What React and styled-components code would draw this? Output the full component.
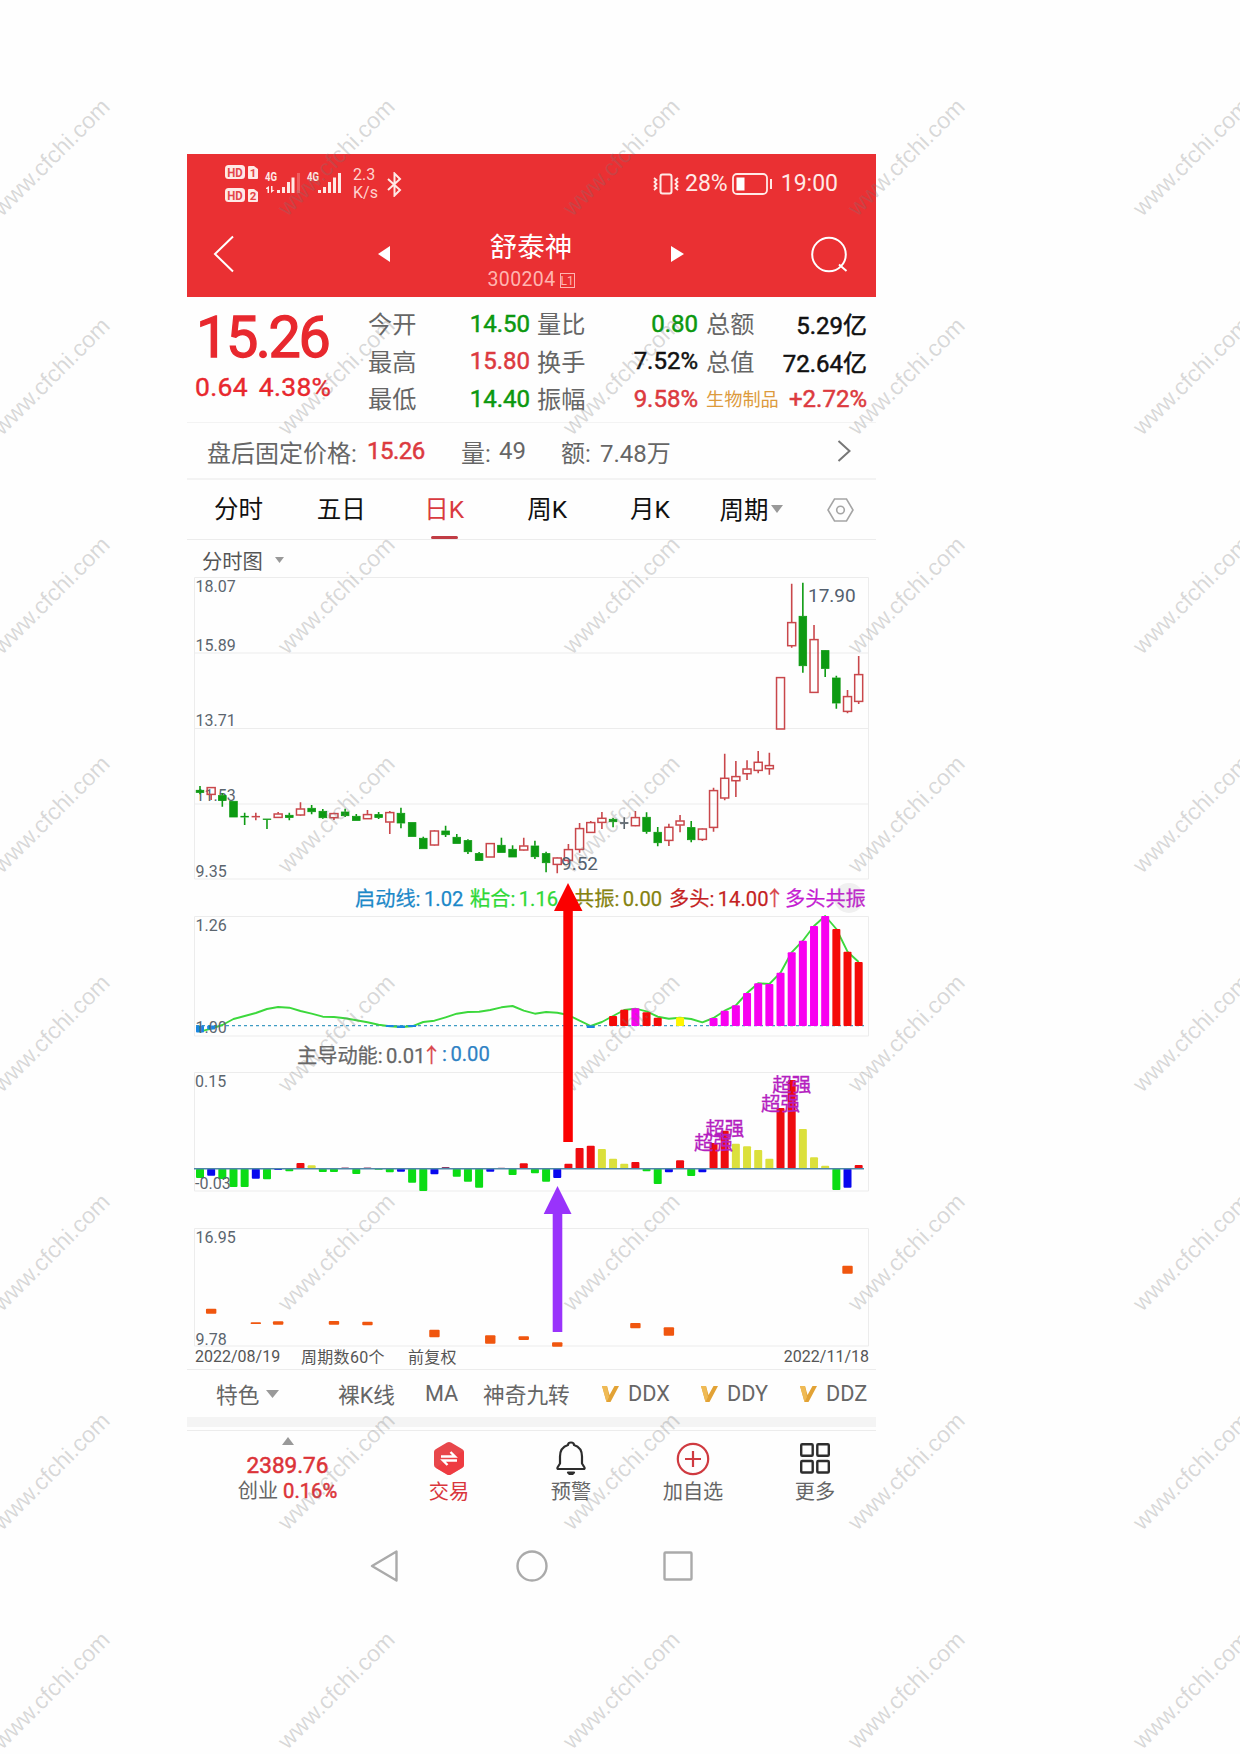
import styled, { createGlobalStyle } from 'styled-components'

const GlobalStyle = createGlobalStyle`
  * { box-sizing: border-box; }
  body {
    margin: 0;
    background: #fefefe;
    font-family: Roboto, "Noto Sans CJK SC", sans-serif;
  }
`

const Page = styled.div`
  position: relative;
  width: 1240px;
  height: 1754px;
  padding: 154px 0 0 187px;
  overflow: hidden;
`

const Screen = styled.main`
  width: 689px;
  color: #666;
  white-space: nowrap;
`

const Header = styled.header`
  height: 143px;
  background: #ea3033;
  color: #fff;
`

const StatusBar = styled.div`
  height: 60px;
  display: flex;
  align-items: center;
  padding: 0 38px;
  color: #ffe9e6;
`

const Speed = styled.div`
  width: 34px;
  font-size: 16px;
  line-height: 18px;
  color: #ffd3cf;
`

const StatusText = styled.span`
  font-size: 23px;
  line-height: 30px;
  margin-left: ${p => p.$ml}px;
`

const Spacer = styled.div`
  flex: 1;
`

const TitleBar = styled.div`
  height: 83px;
  display: grid;
  grid-template-columns: 165px 306px 1fr 38px;
  align-items: start;
  padding: 17px 27px 0 26px;
`

const TitleNav = styled.div`
  display: grid;
  grid-template-columns: 1fr auto 1fr;

  svg:last-child {
    justify-self: end;
  }
`

const TitleText = styled.div`
  text-align: center;
`

const StockName = styled.h1`
  margin: 0;
  font-size: 27.5px;
  line-height: 34px;
  font-weight: 400;
`

const StockCode = styled.div`
  display: flex;
  align-items: center;
  justify-content: center;
  gap: 4px;
  font-size: 19.5px;
  line-height: 30px;
  letter-spacing: 0.4px;
  color: #ffb5b0;
`

const Level = styled.span`
  width: 15px;
  height: 15px;
  border: 1px solid #ffb5b0;
  font-size: 12px;
  line-height: 14px;
  letter-spacing: 0;
  text-align: center;
`

const Quote = styled.section`
  display: flex;
  height: 126px;
  border-bottom: 1px solid #f3f3f3;
`

const PriceBlock = styled.div`
  width: 180px;
  padding: 11px 0 0 9px;
  color: #e8282e;
`

const Price = styled.div`
  font-size: 57.5px;
  font-weight: 400;
  line-height: 60px;
  letter-spacing: -2.4px;
  -webkit-text-stroke: 1.3px currentColor;
`

const Change = styled.div`
  margin: 5px 0 0 -1px;
  font-size: 26.5px;
  line-height: 28px;
  letter-spacing: 0.3px;
  word-spacing: 4px;
  -webkit-text-stroke: 0.4px currentColor;
`

const Stats = styled.div`
  display: grid;
  grid-template-columns: 70px 93px 77px 91px 83px 86px;
  grid-auto-rows: 37.6px;
  align-items: center;
  padding-top: 8px;
`

const StatLabel = styled.span`
  padding-left: ${p => p.$pl}px;
  margin-top: -2px;
  font-size: ${p => (p.$sector ? 18.2 : 24.2)}px;
  color: ${p => (p.$sector ? '#dc9a3c' : '#666')};
`

const StatValue = styled.span`
  display: flex;
  justify-content: flex-end;
  font-size: 24px;
  color: ${p => p.$color};
  -webkit-text-stroke: 0.5px currentColor;
`

const FixedPrice = styled.section`
  display: flex;
  align-items: center;
  height: 57px;
  padding: 1px 25px 0 20px;
  border-bottom: 2px solid #f3f3f3;
  font-size: 24px;
`

const Part = styled.span`
  width: ${p => p.$w}px;
  flex: none;
  color: ${p => p.$color || 'inherit'};
  letter-spacing: ${p => p.$ls || 0}px;
  -webkit-text-stroke: ${p => (p.$color ? 0.5 : 0)}px currentColor;
`

const Tabs = styled.nav`
  display: flex;
  height: 60px;
  border-bottom: 1px solid #ececec;
  color: #111;
  font-size: 24.5px;
`

const Tab = styled.div`
  display: flex;
  flex-direction: column;
  align-items: center;
  justify-content: space-between;
  width: 102.9px;
  padding-top: 12px;
  line-height: 36px;
  color: ${p => (p.$active ? '#d93a40' : '#111')};

  &::after {
    content: '';
    width: 27px;
    height: 3px;
    border-radius: 2px;
    background: ${p => (p.$active ? '#c13c44' : 'transparent')};
  }
`

const PeriodTab = styled.div`
  display: flex;
  align-items: center;
  gap: 3px;
  width: 126px;
  padding: 0 0 2px 18px;
`

const SettingsTab = styled.div`
  display: flex;
  align-items: center;
`

const ChartType = styled.div`
  display: flex;
  align-items: center;
  gap: 12px;
  height: 37px;
  padding: 2px 0 0 15px;
  font-size: 20.3px;
  color: #555;
`

const ChartSvg = styled.svg`
  display: block;
  overflow: visible;
  font-size: 16px;
`

const Legend = styled.div`
  display: flex;
  align-items: center;
  height: ${p => p.$h}px;
  padding-left: ${p => p.$pl}px;
  font-size: 20.2px;
`

const LegendItem = styled.span`
  flex: none;
  width: ${p => p.$w}px;
  color: ${p => p.$color};
  word-spacing: -1.5px;
  -webkit-text-stroke: 0.25px currentColor;
`

const Arrow = styled.span`
  margin-left: -4px;
  color: #d9484c;
`

const DateRow = styled.div`
  display: flex;
  align-items: center;
  height: 24px;
  padding: 0 7px 3px 8px;
  border-bottom: 1px solid #ececec;
  font-size: 16px;
  color: #555;
`

const Indicators = styled.div`
  display: flex;
  align-items: center;
  height: 47px;
  padding-left: 29px;
  font-size: 21.7px;
`

const Indicator = styled.div`
  display: flex;
  align-items: center;
  flex: none;
  gap: ${p => p.$gap || 0}px;
  width: ${p => p.$w}px;
`

const Band = styled.div`
  height: 14px;
  border-top: 10px solid #f4f4f4;
  border-bottom: 1px solid #ececec;
`

const BottomBar = styled.footer`
  display: grid;
  grid-template-columns: 201px repeat(4, 122px);
  height: 99px;
  font-size: 20.2px;
`

const IndexInfo = styled.div`
  display: flex;
  flex-direction: column;
  align-items: center;
  padding-top: 6px;
`

const IndexValue = styled.div`
  margin-top: 6px;
  font-size: 22.5px;
  line-height: 28px;
  color: #dc3338;
  -webkit-text-stroke: 0.5px currentColor;
`

const IndexChange = styled.div`
  line-height: 24px;
  span {
    color: #dc3338;
    -webkit-text-stroke: 0.5px currentColor;
  }
`

const Action = styled.div`
  display: flex;
  flex-direction: column;
  align-items: center;
  padding-top: 10px;
  line-height: 28px;
  color: ${p => p.$color || '#666'};
  svg {
    margin-bottom: 2px;
  }
`

const SystemNav = styled.div`
  display: grid;
  grid-template-columns: repeat(3, 146px);
  justify-content: center;
  justify-items: center;
  padding-top: 20px;

  svg:first-child {
    margin-left: -3px;
  }
`

const Overlay = styled.svg`
  position: absolute;
  left: 0;
  top: 0;
  pointer-events: none;
`

const RED = '#c9474b'
const GREEN = '#0d9a12'
const GRID = '#ececec'
const AXIS = '#5b656e'

const x = i => 13 + i * 11.164

// direction, high, body top, body bottom, low
const CANDLES = [
  ['g', 209, 213, 215.7, 217.3], ['r', 210.3, 210.3, 217.7, 223], ['g', 216.3, 218.3, 223.7, 229.7],
  ['g', 224, 224, 240.3, 240.3], ['g', 235.7, 239, 240.3, 248], ['r', 235.7, 239, 240.3, 243.3],
  ['g', 241.7, 241.7, 242.7, 252], ['r', 235, 236.7, 240.7, 240.7], ['g', 235.7, 238, 240.7, 243.3],
  ['r', 225.3, 231.7, 238.3, 239], ['g', 228, 231, 235, 237.3], ['g', 232, 234, 241, 241.7],
  ['r', 235.7, 236.3, 241, 243], ['g', 231.7, 234.7, 239, 240], ['g', 237, 239, 243.7, 243.7],
  ['r', 233, 237.3, 242, 242], ['g', 235, 237.3, 240.7, 242], ['r', 234, 235.3, 245.3, 257],
  ['g', 230.7, 236, 246.3, 251.3], ['g', 245.3, 245.3, 259.7, 259.7], ['g', 259.7, 261, 272, 272],
  ['r', 253, 253.7, 268.3, 268.7], ['g', 248.7, 253.7, 258, 260], ['g', 257, 260, 266.7, 266.7],
  ['g', 262.3, 263.3, 275, 277], ['g', 275, 276.3, 283.7, 283.7], ['r', 266, 266.3, 280.3, 280.3],
  ['g', 260.7, 268, 275.7, 275.7], ['g', 268.3, 272, 280.3, 280.3], ['r', 260.7, 268.7, 273.3, 273.7],
  ['g', 263.7, 268.7, 280, 282], ['g', 274.7, 276.3, 286, 295.3], ['r', 280.3, 280.7, 287.7, 296.3],
  ['r', 267, 272.3, 283.7, 285.7], ['r', 246, 251.3, 272.7, 275.7], ['r', 244, 245.3, 255.7, 255.7],
  ['r', 235, 241, 245.7, 252], ['g', 241, 242, 245, 250.3], ['n', 240.3, 245.3, 246.7, 252],
  ['r', 234, 240.3, 249, 249.3], ['g', 235.3, 240, 254.7, 256.7], ['g', 250, 255, 266, 269.3],
  ['r', 246.7, 250, 263.7, 269], ['r', 238, 243.7, 248.3, 255.3], ['g', 244, 250.3, 263, 265.3],
  ['r', 251.3, 251.7, 262.7, 264], ['r', 210.7, 213.3, 250.7, 254.7], ['r', 176.7, 201, 221.3, 223.3],
  ['r', 184, 199.3, 204, 220], ['r', 183.3, 191.7, 197, 203], ['r', 174, 185, 193.7, 196.3],
  ['r', 175.7, 188.3, 192, 197.7], ['r', 100.3, 100.3, 152.3, 152.3], ['r', 6.7, 45.3, 69, 70.7],
  ['g', 5.7, 39, 89, 95.7], ['r', 48, 62.3, 115.7, 115.7], ['g', 73, 73.3, 91.7, 100],
  ['g', 98.7, 100.7, 126.3, 131.7], ['r', 113, 119.3, 134.7, 136.3], ['r', 79, 97.3, 124.7, 127],
]

const TREND = [
  115.7, 112.7, 109, 103, 100, 97, 93, 91, 91.7, 95, 97.7, 100.7, 101, 102.3, 104.3, 106.3, 108.7, 110.3, 111,
  110.3, 106, 104.7, 101.3, 97.7, 96, 95.7, 94, 91.3, 90, 94.7, 97.7, 96, 96.7, 99, 104.7, 110, 106, 100, 94,
  92.6, 95.3, 100.7, 102.7, 101.7, 103, 106.3, 102, 94.7, 89.3, 77, 67.3, 68, 56.7, 36.3, 24.7, 10, 0, 13, 35.7, 46,
]

const MAGENTA = '#f800f0'
const BRIGHT = '#f40a08'

const TREND_BARS = [
  [37, 100, BRIGHT], [38, 93.7, BRIGHT], [39, 92.3, MAGENTA], [40, 96.3, BRIGHT], [41, 101.7, BRIGHT],
  [43, 101.3, '#fff500'], [46, 102, MAGENTA], [47, 94.7, MAGENTA], [48, 89.3, MAGENTA], [49, 77, MAGENTA],
  [50, 67.3, MAGENTA], [51, 68, MAGENTA], [52, 56.7, MAGENTA], [53, 36.3, MAGENTA], [54, 24.7, MAGENTA],
  [55, 10, MAGENTA], [56, 0, MAGENTA], [57, 13, BRIGHT], [58, 35.7, BRIGHT], [59, 46, BRIGHT],
]

const ENERGY_COLORS = { g: '#0bdc14', b: '#0808ee', r: '#ee0b10', y: '#dbe03c', p: '#8a3b66' }

const ENERGY = [
  ['g', 106], ['b', 103.7], ['g', 107], ['g', 115], ['g', 115], ['b', 106.7], ['g', 107.3], ['b', 97.9],
  ['g', 99.3], ['r', 91], ['y', 93.3], ['g', 100], ['g', 100], ['p', 95.5], ['g', 102], ['p', 95.5],
  ['g', 97.8], ['g', 100.3], ['b', 99.7], ['g', 110.7], ['g', 119], ['b', 102.3], ['p', 95], ['g', 104.7],
  ['g', 109.7], ['g', 115.7], ['b', 99.7], ['p', 95.8], ['g', 103], ['r', 91.3], ['g', 101.3], ['g', 109.7],
  ['b', 106], ['r', 91.7], ['r', 76], ['r', 73.7], ['y', 77], ['y', 86.7], ['y', 91.7], ['r', 90],
  ['g', 99.3], ['g', 112], ['b', 100.3], ['r', 88.3], ['g', 104], ['b', 100.3], ['r', 71], ['r', 58.7],
  ['y', 71.7], ['y', 74.3], ['y', 78], ['y', 86.7], ['r', 36], ['r', 8], ['y', 57], ['y', 85.3],
  ['y', 93.7], ['g', 118], ['b', 115.7], ['r', 93],
]

const STRONG = [[46, 77.5], [47, 64], [52, 39], [53, 20]]

const SIGNALS = [
  [1, 80.7, 85.7], [5, 94.3, 96], [7, 93.3, 96.7], [12, 93, 96.7], [15, 93.7, 97.3], [21, 101.7, 109.3],
  [26, 107.3, 115.7], [29, 108.3, 112], [32, 114.3, 118.7], [39, 95, 100.3], [42, 99.3, 107.7], [58, 37.7, 45.7],
]

const STATS = [
  ['今开', '14.50', '#0c980f', '量比', '0.80', '#0c980f', '总额', '5.29亿', '#111'],
  ['最高', '15.80', '#dc3a3f', '换手', '7.52%', '#111', '总值', '72.64亿', '#111'],
  ['最低', '14.40', '#0c980f', '振幅', '9.58%', '#dc3a3f', '生物制品', '+2.72%', '#dc3a3f'],
]

function Caret({ w = 12, h = 8, up }) {
  return (
    <svg width={w} height={h} viewBox="0 0 12 7" preserveAspectRatio="none">
      <path d={up ? 'M0 7 6 0 12 7z' : 'M0 0H12L6 7z'} fill="#999" />
    </svg>
  )
}

function VipMark() {
  return (
    <svg width="17" height="16" viewBox="0 0 17 16">
      <path d="M0 0H5L7.500 9 12.500 0H17L8.500 16H4.500z" fill="#e2a235" />
      <path d="M0 0H5L7 11 4.500 16z" fill="#efba55" />
    </svg>
  )
}

function StatusIcons() {
  return (
    <svg width="128" height="44" viewBox="0 0 128 44" fill="#ffe9e6">
      {[3, 26].map((y, i) => (
        <g key={y}>
          <rect x="0" y={y} width="20" height="14" rx="3.500" />
          <path d={`M23 ${y + 2}q0-1 1-1h5l4 3v9q0 1-1 1h-8q-1 0-1-1z`} />
          <text x="10" y={y + 11.6} fontSize="13" fontWeight="700" textAnchor="middle" textLength="15.500" lengthAdjust="spacingAndGlyphs" fill="#e4464a">HD</text>
          <text x="28" y={y + 11.6} fontSize="11.500" fontWeight="700" textAnchor="middle" fill="#e4464a">{i + 1}</text>
        </g>
      ))}
      <text x="40" y="19" fontSize="12" fontWeight="700" textLength="12" lengthAdjust="spacingAndGlyphs">4G</text>
      <text x="82" y="19" fontSize="12" fontWeight="700" textLength="12" lengthAdjust="spacingAndGlyphs">4G</text>
      <path d="M41 26l3-2v7h-1.500v-4H41zM46 24v7l3.500-3H47.500v-4z" />
      <path d="M52 28h3v3h-3zM57 25h3v6h-3zM62 20h3v11h-3zM66.500 15.500h3V31h-3z" />
      <path d="M72 11h3v20h-3z" opacity="0.25" />
      <path d="M93 28h3v3h-3zM98 25h3v6h-3zM103 20h3v11h-3zM108 15.500h3V31h-3zM113 11h3v20h-3z" />
    </svg>
  )
}

function PriceChart() {
  return (
    <ChartSvg width="689" height="302">
      <path d="M7.500 .5H681.500V302H7.500zM7.500 76H681.500M7.500 151.500H681.500M7.500 227H681.500" fill="none" stroke={GRID} />
      <g fill={AXIS}>
        <text x="8.500" y="15">18.07</text>
        <text x="8.500" y="73.500">15.89</text>
        <text x="8.500" y="149">13.71</text>
        <text x="8.500" y="224">11.53</text>
        <text x="8.500" y="299.500">9.35</text>
      </g>
      {CANDLES.map(([dir, high, top, bottom, low], i) => {
        const color = { g: GREEN, r: RED, n: '#59636b' }[dir]
        const hollow = dir === 'r' && bottom - top > 2
        return (
          <g key={i} stroke={color} strokeWidth="1.600">
            <path d={`M${x(i)} ${high}V${top}M${x(i)} ${bottom}V${low}`} />
            <rect
              x={x(i) - (hollow ? 4 : 3.8)}
              y={top + 0.3}
              width={hollow ? 8 : 7.6}
              height={Math.max(bottom - top - 0.6, 0.3)}
              fill={hollow ? 'none' : color}
              strokeWidth={hollow ? 1.5 : 0.8}
            />
          </g>
        )
      })}
      <g fontSize="19" fill="#53606e">
        <text x="621" y="24.500">17.90</text>
        <text x="374" y="292.500">9.52</text>
      </g>
    </ChartSvg>
  )
}

function TrendChart() {
  const points = TREND.map((y, i) => `${x(i)},${y}`).join(' ')
  return (
    <ChartSvg width="689" height="120">
      <path d="M7.500 .5H681.500V120H7.500z" fill="none" stroke={GRID} />
      <path d="M9 109.700H677" stroke="#3f9cc4" strokeWidth="1.300" strokeDasharray="3 3" />
      <polyline points={points} fill="none" stroke="#3cd83c" strokeWidth="1.900" strokeLinejoin="round" />
      {TREND_BARS.map(([i, y, color]) => (
        <rect key={i} x={x(i) - 4} y={y} width="8" height={110 - y} rx="1" fill={color} />
      ))}
      <g fill="#1a86e0">
        <rect x={x(0) - 4} y="109.500" width="8" height="7" rx="1" />
        <rect x={x(1) - 4} y="109.500" width="8" height="4" rx="1" />
        <rect x={x(17) - 4} y="109" width="8" height="2" />
        <rect x={x(18) - 4} y="109.500" width="8" height="2.500" />
        <rect x={x(19) - 4} y="109" width="8" height="2" />
        <rect x={x(35) - 4} y="109.500" width="8" height="2.500" />
      </g>
      <g fill={AXIS}>
        <text x="8.500" y="15">1.26</text>
        <text x="8.500" y="117">1.00</text>
      </g>
    </ChartSvg>
  )
}

function EnergyChart() {
  const zero = 96.8
  return (
    <ChartSvg width="689" height="120">
      <path d="M7.500 .5H681.500V119H7.500z" fill="none" stroke={GRID} />
      {ENERGY.map(([kind, y], i) => (
        <rect
          key={i}
          x={x(i) - 4}
          y={Math.min(y, zero)}
          width="8"
          height={Math.abs(y - zero)}
          rx="1"
          fill={ENERGY_COLORS[kind]}
        />
      ))}
      <path d={`M7 ${zero}H677`} stroke="#4f86a8" strokeWidth="1.500" />
      <g fill="#b41fc0" stroke="#b41fc0" strokeWidth="0.300" fontSize="19.500" textAnchor="middle">
        {STRONG.map(([i, y]) => <text key={i} x={x(i)} y={y}>超强</text>)}
      </g>
      <g fill={AXIS}>
        <text x="8" y="15">0.15</text>
        <text x="8" y="117">-0.03</text>
      </g>
    </ChartSvg>
  )
}

function SignalChart() {
  return (
    <ChartSvg width="689" height="118">
      <path d="M7.500 .5H681.500V118H7.500z" fill="none" stroke={GRID} />
      {SIGNALS.map(([i, top, bottom]) => (
        <rect key={i} x={x(i) - 5.2} y={top} width="10.400" height={bottom - top} rx="1" fill="#f0560f" />
      ))}
      <g fill={AXIS}>
        <text x="8.500" y="14.500">16.95</text>
        <text x="8.500" y="116.500">9.78</text>
      </g>
    </ChartSvg>
  )
}

function Watermarks() {
  const marks = []
  for (let row = 0; row < 8; row++) {
    for (let col = 0; col < 5; col++) marks.push([51.5 + col * 285, 157.5 + row * 219])
  }
  return (
    <g fill="#777" fillOpacity="0.28" fontFamily='"Liberation Sans", sans-serif' fontSize="23.300" textAnchor="middle">
      {marks.map(([cx, cy]) => (
        <text key={`${cx}-${cy}`} transform={`translate(${cx} ${cy}) rotate(-45)`} y="7.500">www.cfchi.com</text>
      ))}
    </g>
  )
}

export default function App() {
  return (
    <Page>
      <GlobalStyle />
      <Screen>
        <Header>
          <StatusBar>
            <StatusIcons />
            <Speed>2.3<br />K/s</Speed>
            <svg width="15" height="25" viewBox="0 0 15 25" fill="none" stroke="#ffe9e6" strokeWidth="2">
              <path d="M1 7 13 18 7.500 23.500V1.500L13 7 1 18" />
            </svg>
            <Spacer />
            <svg width="26" height="22" viewBox="0 0 26 22" fill="none" stroke="#ffe9e6" strokeWidth="2">
              <rect x="7.500" y="1.500" width="11" height="19" rx="2" />
              <path d="M1 5l2.500 2L1.500 9l2 2-2 2 2 2L1 17M25 5l-2.500 2 2 2-2 2 2 2-2 2L25 17" strokeWidth="1.800" />
            </svg>
            <StatusText $ml={6}>28%</StatusText>
            <StatusText as="svg" $ml={4} width="41" height="22" viewBox="0 0 41 22">
              <rect x="1" y="1" width="34" height="20" rx="4" fill="none" stroke="#ffe9e6" strokeWidth="1.800" />
              <rect x="4.500" y="4.500" width="8" height="13" fill="#fff" />
              <path d="M39 6V16" stroke="#ffe9e6" strokeWidth="2" />
            </StatusText>
            <StatusText $ml={8}>19:00</StatusText>
          </StatusBar>
          <TitleBar>
            <svg width="22" height="46" viewBox="0 0 22 46" fill="none" stroke="#fff" strokeWidth="2">
              <path d="M20 5.500 2 23 20 40.500" />
            </svg>
            <TitleNav>
              <svg width="14" height="46" viewBox="0 0 14 46"><path d="M0 23 12 15V31z" fill="#fff" /></svg>
              <TitleText>
                <StockName>舒泰神</StockName>
                <StockCode>300204<Level>L1</Level></StockCode>
              </TitleText>
              <svg width="14" height="46" viewBox="0 0 14 46"><path d="M14 23 1 15V31z" fill="#fff" /></svg>
            </TitleNav>
            <span />
            <svg width="38" height="46" viewBox="0 0 38 46" fill="none" stroke="#fff" strokeWidth="2">
              <circle cx="18" cy="23.500" r="16.800" />
              <path d="M28 33.500 35.500 40" />
            </svg>
          </TitleBar>
        </Header>

        <Quote>
          <PriceBlock>
            <Price>15.26</Price>
            <Change>0.64 4.38%</Change>
          </PriceBlock>
          <Stats>
            {STATS.map(([l1, v1, c1, l2, v2, c2, l3, v3, c3]) => [
              <StatLabel key={l1} $pl={1}>{l1}</StatLabel>,
              <StatValue key={v1} $color={c1}>{v1}</StatValue>,
              <StatLabel key={l2} $pl={7}>{l2}</StatLabel>,
              <StatValue key={v2} $color={c2}>{v2}</StatValue>,
              <StatLabel key={l3} $pl={8} $sector={l3.length > 2}>{l3}</StatLabel>,
              <StatValue key={v3} $color={c3}>{v3}</StatValue>,
            ])}
          </Stats>
        </Quote>

        <FixedPrice>
          <Part $w={160}>盘后固定价格:</Part>
          <Part $w={94} $color="#dc3a3f" $ls={-0.5}>15.26</Part>
          <Part $w={38}>量:</Part>
          <Part $w={62}>49</Part>
          <Part $w={39}>额:</Part>
          <Part $w={90}>7.48万</Part>
          <Spacer />
          <svg width="14" height="22" viewBox="0 0 14 22" fill="none" stroke="#777" strokeWidth="2">
            <path d="M1.500 1 12.500 11 1.500 21" />
          </svg>
        </FixedPrice>

        <Tabs>
          <Tab>分时</Tab>
          <Tab>五日</Tab>
          <Tab $active>日K</Tab>
          <Tab>周K</Tab>
          <Tab>月K</Tab>
          <PeriodTab>周期<Caret /></PeriodTab>
          <SettingsTab>
            <svg width="27" height="24" viewBox="0 0 27 24" fill="none" stroke="#a5a5a5" strokeWidth="1.600">
              <path d="M7.500 1h12L26 12 19.500 23h-12L1 12z" />
              <circle cx="13.500" cy="12" r="3.800" />
            </svg>
          </SettingsTab>
        </Tabs>

        <ChartType>分时图<Caret w={9} h={6} /></ChartType>
        <PriceChart />
        <Legend $h={37} $pl={168}>
          <LegendItem $w={115} $color="#1c88c8">启动线: 1.02</LegendItem>
          <LegendItem $w={104} $color="#2fd836">粘合: 1.16</LegendItem>
          <LegendItem $w={95} $color="#85820f">共振: 0.00</LegendItem>
          <LegendItem $w={116} $color="#c41f22">多头: 14.00<Arrow>↑</Arrow></LegendItem>
          <LegendItem $w={82} $color="#c41bd2">多头共振</LegendItem>
        </Legend>
        <TrendChart />
        <Legend $h={36} $pl={110}>
          <LegendItem $w={89} $color="#666">主导动能:</LegendItem>
          <LegendItem $w={56} $color="#666">0.01<Arrow>↑</Arrow></LegendItem>
          <LegendItem $w={60} $color="#2f82c4">: 0.00</LegendItem>
        </Legend>
        <EnergyChart />
        <Legend $h={36} $pl={0} />
        <SignalChart />

        <DateRow>
          <Part $w={106}>2022/08/19</Part>
          <Part $w={107} $ls={0.3}>周期数60个</Part>
          <Part $w={60} $ls={0.3}>前复权</Part>
          <Spacer />
          <span>2022/11/18</span>
        </DateRow>
        <Indicators>
          <Indicator $w={122} $gap={7}>特色<Caret w={13} /></Indicator>
          <Indicator $w={87}>裸K线</Indicator>
          <Indicator $w={58}>MA</Indicator>
          <Indicator $w={119}>神奇九转</Indicator>
          <Indicator $w={99} $gap={9}><VipMark />DDX</Indicator>
          <Indicator $w={99} $gap={9}><VipMark />DDY</Indicator>
          <Indicator $w={76} $gap={9}><VipMark />DDZ</Indicator>
        </Indicators>
        <Band />

        <BottomBar>
          <IndexInfo>
            <Caret up />
            <IndexValue>2389.76</IndexValue>
            <IndexChange>创业 <span>0.16%</span></IndexChange>
          </IndexInfo>
          <Action $color="#d9363c">
            <svg width="32" height="35" viewBox="0 0 32 35">
              <path d="M14 1.500q2-1 4 0L29 8q2 1 2 3v13q0 2-2 3L18 33.500q-2 1-4 0L3 27q-2-1-2-3V11q0-2 2-3z" fill="#e8474b" />
              <path d="M16 17.500 31 10v14q0 2-2 3L18 33.500q-2 1-4 0L3 27z" fill="#f2343b" opacity="0.6" />
              <path d="M8 15.500H22L17.500 11M24 19.500H10L14.500 24" fill="none" stroke="#fff" strokeWidth="2.400" />
            </svg>
            交易
          </Action>
          <Action>
            <svg width="30" height="35" viewBox="0 0 30 35" fill="none" stroke="#2d2d2d" strokeWidth="2.200" strokeLinejoin="round">
              <path d="M12 4q0-2.500 3-2.500T18 4q8 2.500 8 11.500v7l2.500 4q.5 1.500-1 1.500h-25q-1.500 0-1-1.500l2.500-4v-7Q4 6.500 12 4z" />
              <path d="M12 31.500H18L16.500 33h-3z" fill="#2d2d2d" />
            </svg>
            预警
          </Action>
          <Action>
            <svg width="34" height="35" viewBox="0 0 34 35" fill="none" stroke="#cf3a40" strokeWidth="2.200">
              <circle cx="17" cy="18" r="15.200" />
              <path d="M17 10v16M9 18h16" />
            </svg>
            加自选
          </Action>
          <Action>
            <svg width="30" height="35" viewBox="0 0 30 35" fill="none" stroke="#2d2d2d" strokeWidth="2.400">
              <rect x="1.200" y="3.200" width="11.500" height="11.500" rx="1" />
              <rect x="17.300" y="3.200" width="11.500" height="11.500" rx="1" />
              <rect x="1.200" y="20" width="11.500" height="11.500" rx="1" />
              <rect x="17.300" y="20" width="11.500" height="11.500" rx="1" />
            </svg>
            更多
          </Action>
        </BottomBar>

        <SystemNav>
          <svg width="28" height="32" viewBox="0 0 28 32" fill="none" stroke="#aaa" strokeWidth="2.400" strokeLinejoin="round">
            <path d="M2 16 26.500 1.500V30.500z" />
          </svg>
          <svg width="32" height="32" viewBox="0 0 32 32" fill="none" stroke="#aaa" strokeWidth="2.400">
            <circle cx="16" cy="16" r="14.500" />
          </svg>
          <svg width="30" height="32" viewBox="0 0 30 32" fill="none" stroke="#aaa" strokeWidth="2.400">
            <rect x="1.500" y="2.500" width="27" height="27" rx="1" />
          </svg>
        </SystemNav>
      </Screen>

      <Overlay width="1240" height="1754">
        <circle cx="849" cy="898" r="15" fill="#888" opacity="0.12" />
        <Watermarks />
        <path d="M568 883 582.500 911H572.800V1142H563.300V911H554z" fill="#fb0000" />
        <path d="M557.500 1186 571.500 1214H562.300V1332H552.700V1214H543.700z" fill="#9933fb" />
      </Overlay>
    </Page>
  )
}
